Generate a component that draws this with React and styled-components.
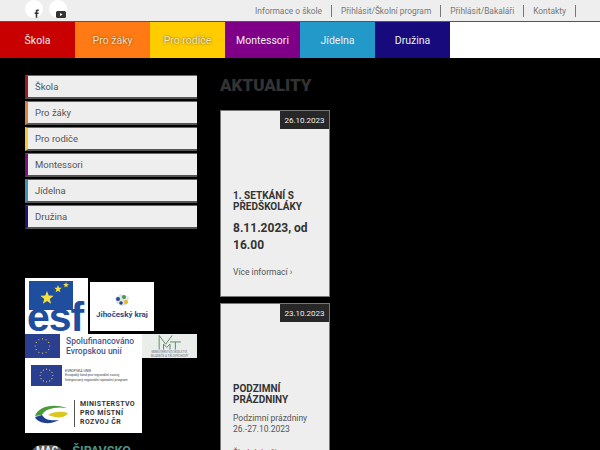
import React from "react";
import styled, { createGlobalStyle } from "styled-components";

const GlobalStyle = createGlobalStyle`
  html, body {
    margin: 0;
    padding: 0;
    background: #000;
  }
  body {
    font-family: Roboto, "Noto Sans", sans-serif;
  }
`;

const Page = styled.div`
  width: 600px;
  height: 450px;
  overflow: hidden;
  background: #000;
`;

const TopBar = styled.div`
  height: 21px;
  background: #eeeeee;
  border-bottom: 1px solid #555;
  display: flex;
  justify-content: space-between;
  overflow: hidden;
`;

const Socials = styled.div`
  display: flex;
  gap: 6px;
  padding-left: 25px;
`;

const SocialButton = styled.a`
  width: 18px;
  height: 18px;
  box-sizing: border-box;
  padding-left: 5px;
  border-radius: 50%;
  background: #fff;
  display: flex;
  align-items: flex-end;
  justify-content: center;
`;

const TopLinks = styled.div`
  display: flex;
  align-items: center;
  padding-right: 24px;
`;

const TopLink = styled.a`
  font-size: 8.4px;
  line-height: 12px;
  color: #777;
  padding: 0 9px;
  border-right: 1px solid #777;
  white-space: nowrap;
`;

const Nav = styled.nav`
  height: 36px;
  background: #fff;
  display: flex;
`;

const NavItem = styled.a`
  width: 75px;
  background: ${(p) => p.$bg};
  color: ${(p) => p.$fg || "#eee"};
  font-size: 10.5px;
  display: flex;
  align-items: center;
  justify-content: center;
  text-shadow: ${(p) => (p.$shadow ? "0 0 2px rgba(90, 50, 0, 0.9)" : "none")};
`;

const Main = styled.main`
  display: flex;
  padding: 17px 0 0 25px;
`;

const Sidebar = styled.aside`
  width: 172px;
  margin-right: 23px;
`;

const SideMenu = styled.ul`
  list-style: none;
  margin: 0 0 49px;
  padding: 0;
  display: flex;
  flex-direction: column;
  gap: 2px;
`;

const SideItem = styled.li`
  height: 21px;
  padding-left: 7px;
  background: #eeeeee;
  border-top: 1px solid #666;
  border-bottom: 2px solid #555;
  border-left: 3px solid ${(p) => p.$accent};
  display: flex;
  align-items: center;
  font-size: 9.5px;
  color: #555;
`;

const Logos = styled.div`
  display: flex;
  flex-direction: column;
`;

const LogoRow = styled.div`
  display: flex;
  align-items: center;
  gap: 2px;
`;

const EsfLogo = styled.div`
  width: 63px;
  height: 56px;
  background: #fff;
`;

const KrajLogo = styled.div`
  width: 64px;
  height: 49px;
  background: #fff;
  display: flex;
  flex-direction: column;
  align-items: center;
  justify-content: center;
  gap: 3px;
  font-size: 8px;
  font-weight: 700;
  color: #2b4a85;
`;

const EuStrip = styled.div`
  height: 24px;
  display: flex;
  background: #fff;
`;

const EuStripText = styled.div`
  width: 82px;
  padding-left: 6px;
  box-sizing: border-box;
  font-size: 8.5px;
  line-height: 10px;
  font-weight: 500;
  color: #45558f;
  display: flex;
  flex-direction: column;
  justify-content: center;
  white-space: nowrap;
`;

const MsmtBox = styled.div`
  flex: 1;
  background: #e9eeea;
  display: flex;
  flex-direction: column;
  align-items: center;
  font-size: 3px;
  line-height: 3.5px;
  color: #667;
  text-align: center;
  white-space: nowrap;
`;

const MinistryBox = styled.div`
  width: 117px;
  height: 75px;
  background: #fff;
  display: flex;
  flex-direction: column;
  box-sizing: border-box;
  padding: 7px 0 0 6px;
`;

const EuRow = styled.div`
  display: flex;
  align-items: center;
  gap: 3px;
`;

const EuSmallText = styled.div`
  font-size: 3.5px;
  line-height: 4.5px;
  color: #444;
  white-space: nowrap;
`;

const MinistryRow = styled.div`
  display: flex;
  align-items: center;
  gap: 4px;
  margin-top: 14px;
  padding-left: 3px;
`;

const MinistryText = styled.div`
  padding-left: 5px;
  border-left: 1px solid #555;
  font-size: 7px;
  line-height: 9px;
  font-weight: 700;
  letter-spacing: 0.4px;
  color: #333;
`;

const MagLogo = styled.div`
  margin-top: 11px;
  display: flex;
  align-items: flex-start;
  gap: 8px;
  padding-left: 5px;
  font-weight: 700;
`;

const MagPill = styled.span`
  margin-top: 1px;
  padding: 0 6px;
  background: #555;
  border-radius: 12px 12px 0 0;
  font-size: 10px;
  line-height: 12px;
  color: #eee;
`;

const MagName = styled.span`
  font-size: 12.5px;
  line-height: 13px;
  color: #4f9080;
`;

const Content = styled.section`
  width: 110px;
`;

const Heading = styled.h1`
  margin: 1px 0 16px;
  font-size: 17px;
  line-height: 18px;
  font-weight: 900;
  color: #333;
`;

const Card = styled.article`
  position: relative;
  box-sizing: border-box;
  height: 187px;
  margin-bottom: 6px;
  padding: 79px 12px 0;
  background: #eeeeee;
  border: 1px solid #777;
`;

const DateBadge = styled.div`
  position: absolute;
  top: 0;
  right: 0;
  width: 49px;
  height: 18px;
  background: #272727;
  color: #eee;
  font-size: 8px;
  display: flex;
  align-items: center;
  justify-content: center;
`;

const CardTitle = styled.h2`
  margin: 0 0 8px;
  font-size: 10px;
  line-height: 11px;
  font-weight: 700;
  color: #333;
`;

const CardLead = styled.p`
  margin: 0 0 6px;
  font-size: 12px;
  line-height: 17px;
  font-weight: 700;
  color: #333;
`;

const CardText = styled.p`
  margin: 0 0 13px;
  font-size: 8.5px;
  line-height: 11px;
  color: #555;
`;

const CardNote = styled.p`
  margin: 0;
  font-size: 8.5px;
  line-height: 11px;
  color: #c03030;
`;

const MoreLink = styled.a`
  font-size: 8.5px;
  color: #555;
`;

const navItems = [
  { label: "Škola", bg: "#c80000", accent: "#a01818" },
  { label: "Pro žáky", bg: "#ff7a14", accent: "#d9843f", fg: "#f3e3c8", shadow: true },
  { label: "Pro rodiče", bg: "#ffcc00", accent: "#f0c93c", fg: "#f6ecb8", shadow: true },
  { label: "Montessori", bg: "#7f0087", accent: "#7a1080" },
  { label: "Jídelna", bg: "#2399c9", accent: "#3c93b5" },
  { label: "Družina", bg: "#160a7c", accent: "#1a1470" },
];

const topLinks = ["Informace o škole", "Přihlásit/Školní program", "Přihlásit/Bakaláři", "Kontakty"];

const EuFlag = ({ width, height }) => {
  const stars = Array.from({ length: 12 }, (_, i) => {
    const a = (i / 12) * Math.PI * 2;
    return (
      <circle
        key={i}
        cx={width / 2 + Math.cos(a) * height * 0.3}
        cy={height / 2 + Math.sin(a) * height * 0.3}
        r="0.6"
        fill="#e6d84a"
      />
    );
  });
  return (
    <svg width={width} height={height} viewBox={`0 0 ${width} ${height}`}>
      <rect width={width} height={height} fill="#2a3f8f" />
      {stars}
    </svg>
  );
};

const Star = ({ x, y, r }) => {
  const pts = Array.from({ length: 10 }, (_, i) => {
    const a = -Math.PI / 2 + (i * Math.PI) / 5;
    const d = i % 2 ? r * 0.42 : r;
    return `${x + Math.cos(a) * d},${y + Math.sin(a) * d}`;
  }).join(" ");
  return <polygon points={pts} fill="#f5e33c" />;
};

const App = () => {
  return (
    <Page>
      <GlobalStyle />
      <TopBar>
        <Socials>
          <SocialButton>
            <svg width="6" height="9" viewBox="0 0 7 10">
              <path d="M2 10V5.500H.7V3.800H2V2.600C2 1 2.900.3 4.200.3h1.300V2H4.600c-.6 0-.8.3-.8.8v1h1.700l-.3 1.700H3.800V10z" fill="#333" />
            </svg>
          </SocialButton>
          <SocialButton>
            <svg width="10" height="7" viewBox="0 0 10 7">
              <rect width="10" height="7" rx="1.500" fill="#333" />
              <path d="M4 2v3l2.600-1.500z" fill="#fff" />
            </svg>
          </SocialButton>
        </Socials>
        <TopLinks>
          {topLinks.map((link) => (
            <TopLink key={link}>{link}</TopLink>
          ))}
        </TopLinks>
      </TopBar>
      <Nav>
        {navItems.map((item) => (
          <NavItem key={item.label} $bg={item.bg} $fg={item.fg} $shadow={item.shadow}>
            {item.label}
          </NavItem>
        ))}
      </Nav>
      <Main>
        <Sidebar>
          <SideMenu>
            {navItems.map((item) => (
              <SideItem key={item.label} $accent={item.accent}>
                {item.label}
              </SideItem>
            ))}
          </SideMenu>
          <Logos>
            <LogoRow>
              <EsfLogo>
                <svg width="63" height="56" viewBox="0 0 63 56">
                  <rect x="4" y="3" width="44" height="29" fill="#1f4e9e" />
                  <Star x={22} y={20} r={7} />
                  <Star x={33} y={11} r={4} />
                  <Star x={41} y={7} r={3} />
                  <text x="2" y="53" fontFamily="Liberation Sans" fontWeight="700" fontSize="41" letterSpacing="-1" fill="#1f4e9e">
                    esf
                  </text>
                </svg>
              </EsfLogo>
              <KrajLogo>
                <svg width="16" height="14" viewBox="0 0 16 14">
                  <path d="M1 5l6-4 8 3-2 8-5 1-6-3z" fill="#dde3ea" />
                  <circle cx="4" cy="6" r="2" fill="#2b4a85" />
                  <circle cx="10" cy="4" r="2" fill="#4a9a4a" />
                  <circle cx="12" cy="9" r="2" fill="#e8b820" />
                  <circle cx="7" cy="10" r="1.800" fill="#2b4a85" />
                </svg>
                Jihočeský kraj
              </KrajLogo>
            </LogoRow>
            <EuStrip>
              <EuFlag width={35} height={24} />
              <EuStripText>
                <span>Spolufinancováno</span>
                <span>Evropskou unií</span>
              </EuStripText>
              <MsmtBox>
                <svg width="26" height="17" viewBox="0 0 24 15">
                  <path d="M2 14V1l6 8 6-8M12 7h10M17 7v7M6 14V9l3 3 3-3v5" fill="none" stroke="#557a5c" strokeWidth="0.8" />
                </svg>
                <span>
                  MINISTERSTVO ŠKOLSTVÍ,
                  <br />
                  MLÁDEŽE A TĚLOVÝCHOVY
                </span>
              </MsmtBox>
            </EuStrip>
            <MinistryBox>
              <EuRow>
                <EuFlag width={31} height={21} />
                <EuSmallText>
                  EVROPSKÁ UNIE
                  <br />
                  Evropský fond pro regionální rozvoj
                  <br />
                  Integrovaný regionální operační program
                </EuSmallText>
              </EuRow>
              <MinistryRow>
                <svg width="36" height="20" viewBox="0 0 36 20">
                  <path d="M1 12C4 3 18-1 33 4 22 2 10 5 8 11z" fill="#4a9a3a" />
                  <path d="M1 13c3 7 16 8 24 3-8 1-14 0-17-5z" fill="#1f3f8f" />
                  <path d="M14 11c6-4 14-4 20-2-3 5-10 6-20 2z" fill="#d8c820" />
                </svg>
                <MinistryText>
                  MINISTERSTVO
                  <br />
                  PRO MÍSTNÍ
                  <br />
                  ROZVOJ ČR
                </MinistryText>
              </MinistryRow>
            </MinistryBox>
            <MagLogo>
              <MagPill>MAG</MagPill>
              <MagName>ŠIPAVSKO</MagName>
            </MagLogo>
          </Logos>
        </Sidebar>
        <Content>
          <Heading>AKTUALITY</Heading>
          <Card>
            <DateBadge>26.10.2023</DateBadge>
            <CardTitle>1. SETKÁNÍ S PŘEDŠKOLÁKY</CardTitle>
            <CardLead>8.11.2023, od 16.00</CardLead>
            <MoreLink>Více informací ›</MoreLink>
          </Card>
          <Card>
            <DateBadge>23.10.2023</DateBadge>
            <CardTitle>PODZIMNÍ PRÁZDNINY</CardTitle>
            <CardText>
              Podzimní prázdniny
              <br />
              26.-27.10.2023
            </CardText>
            <CardNote>Školní družina</CardNote>
          </Card>
        </Content>
      </Main>
    </Page>
  );
};

export default App;
